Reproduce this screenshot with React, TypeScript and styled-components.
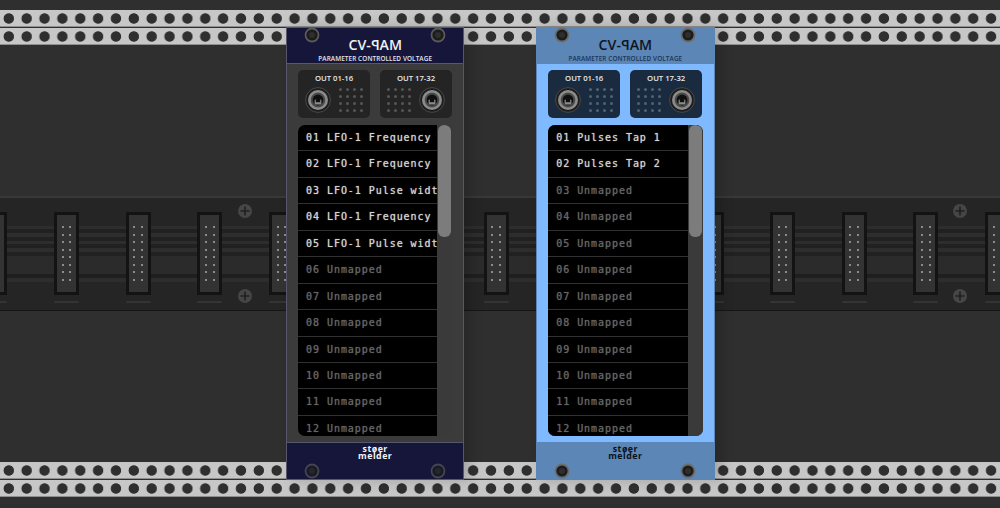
import React from 'react'
import styled, { createGlobalStyle } from 'styled-components'

const GlobalStyle = createGlobalStyle`
  html, body {
    margin: 0;
    padding: 0;
    background: #2f2f2f;
    overflow: hidden;
  }
`

interface Skin {
  panel: string
  band: string
  edge: string
  title: string
  subtitle: string
  brand: string
  block: string
  dot: string
  screwRing: string
}

const DARK: Skin = {
  panel: '#3b3b3b',
  band: '#15163a',
  edge: '#56566c',
  title: '#f0f0f0',
  subtitle: '#e6e6ee',
  brand: '#f4f4f4',
  block: '#242424',
  dot: '#565656',
  screwRing: '#5a5a5a',
}

const LIGHT: Skin = {
  panel: '#7fb9ff',
  band: '#5b86b6',
  edge: '#5b86b6',
  title: '#10151d',
  subtitle: '#1c3557',
  brand: '#0c1118',
  block: '#1a2a3f',
  dot: '#4f6475',
  screwRing: '#6c6c6c',
}

const Rack = styled.div`
  position: relative;
  width: 1000px;
  height: 508px;
  overflow: hidden;
  display: flex;
  flex-direction: column;
  padding: 10px 0;
  box-sizing: border-box;
  background: #2f2f2f;
`

const Rail = styled.div`
  height: 17px;
  flex: none;
  margin-bottom: 1px;
  background-color: #c7c7c7;
  background-image: radial-gradient(circle at 8.8px 8.5px, #2f2f2f 4.8px, transparent 5.6px);
  background-size: 17.86px 17px;
  border-bottom: 1px solid #8f8f8f;
  box-sizing: border-box;
`

const Middle = styled.div`
  flex: 1;
  display: flex;
  flex-direction: column;
  padding-top: 150px;
  min-height: 0;
`

const Busboard = styled.div`
  position: relative;
  height: 115px;
  flex: none;
  overflow: hidden;
  box-sizing: border-box;
  border-top: 2px solid #383838;
  border-bottom: 1px solid #161616;
  background:
    linear-gradient(#2b2b2b, #2b2b2b) 0 58px / 100% 18px no-repeat,
    linear-gradient(#2d2d2d, #2d2d2d) 0 28px / 100% 3px no-repeat,
    linear-gradient(#2d2d2d, #2d2d2d) 0 35px / 100% 4px no-repeat,
    linear-gradient(#2d2d2d, #2d2d2d) 0 43px / 100% 3px no-repeat,
    linear-gradient(#2d2d2d, #2d2d2d) 0 50px / 100% 4px no-repeat,
    linear-gradient(#2d2d2d, #2d2d2d) 0 80px / 100% 4px no-repeat,
    linear-gradient(#212121, #212121) 0 31px / 100% 27px no-repeat,
    linear-gradient(#1f1f1f, #1f1f1f) 0 76px / 100% 4px no-repeat,
    #252525;
`

const ConnectorRow = styled.div`
  display: flex;
  gap: 46.62px;
  margin-left: -17.6px;
  padding-top: 14px;
`

const ConnectorSlot = styled.div`
  flex: none;
  width: 25px;
  display: flex;
  flex-direction: column;
  gap: 6px;
`

const Connector = styled.div`
  height: 83px;
  box-sizing: border-box;
  border: 3px solid #131313;
  background: #333;
  display: grid;
  grid-template-columns: repeat(2, 2px);
  grid-auto-rows: 2px;
  justify-content: center;
  column-gap: 5.7px;
  row-gap: 5.5px;
  padding-top: 11px;
`

const Pin = styled.i`
  display: block;
  background: #8c8c8c;
`

const ConnectorTick = styled.div`
  height: 2px;
  background: #343434;
  border-radius: 1px;
`

const BoardScrew = styled.svg<{ $x: number; $y: number }>`
  position: absolute;
  left: ${(p) => p.$x}px;
  top: ${(p) => p.$y}px;
  width: 14px;
  height: 14px;
`

const Module = styled.div<{ $x: number; $skin: Skin }>`
  position: absolute;
  top: 27px;
  left: ${(p) => p.$x}px;
  width: 178.4px;
  height: 452.6px;
  display: flex;
  flex-direction: column;
  background: ${(p) => p.$skin.panel};
  box-shadow: inset 0 0 0 1px ${(p) => p.$skin.edge}, 6px 0 12px rgba(0, 0, 0, 0.18);
`

const Band = styled.div<{ $skin: Skin }>`
  flex: none;
  background: ${(p) => p.$skin.band};
  border: 1px solid ${(p) => p.$skin.edge};
  box-sizing: border-box;
  display: flex;
  flex-direction: column;
  align-items: center;
`

const Header = styled(Band)`
  height: 37px;
  padding-top: 8px;
`

const Footer = styled(Band)`
  height: 38px;
  padding-top: 3px;
`

const Title = styled.div<{ $skin: Skin }>`
  font-family: 'Open Sans', sans-serif;
  font-size: 14.2px;
  line-height: 18px;
  font-weight: 600;
  color: ${(p) => p.$skin.title};
`

const MirroredLetter = styled.span`
  display: inline-block;
  transform: scaleX(-1);
`

const Subtitle = styled.div<{ $skin: Skin }>`
  font-family: 'Open Sans', sans-serif;
  font-size: 6.4px;
  line-height: 9px;
  font-weight: 600;
  letter-spacing: 0.1px;
  white-space: nowrap;
  color: ${(p) => p.$skin.subtitle};
`

const BrandLine = styled.div<{ $skin: Skin }>`
  font-family: 'Open Sans', sans-serif;
  font-size: 8.8px;
  line-height: 7.4px;
  height: 7.4px;
  font-weight: 700;
  letter-spacing: 0.5px;
  text-align: center;
  color: ${(p) => p.$skin.brand};
`

const Body = styled.div`
  flex: 1;
  min-height: 0;
  display: flex;
  flex-direction: column;
  gap: 7px;
  padding: 6px 12px;
  box-sizing: border-box;
`

const Ports = styled.div`
  flex: none;
  display: grid;
  grid-template-columns: 72px 72px;
  gap: 10px;
`

const PortBlock = styled.div<{ $skin: Skin }>`
  height: 48px;
  border-radius: 5px;
  background: ${(p) => p.$skin.block};
  display: flex;
  flex-direction: column;
  align-items: center;
`

const PortLabel = styled.div`
  font-family: 'Open Sans', sans-serif;
  font-weight: 600;
  font-size: 7.7px;
  line-height: 9px;
  margin-top: 4px;
  color: #eaeaea;
`

const PortRow = styled.div<{ $flip?: boolean }>`
  display: flex;
  flex-direction: ${(p) => (p.$flip ? 'row-reverse' : 'row')};
  align-items: center;
  gap: 8px;
  margin-top: 1.5px;
  height: 30px;
`

const DotGrid = styled.div`
  display: grid;
  grid-template-columns: repeat(4, 3px);
  grid-auto-rows: 3px;
  gap: 4px;
`

const Dot = styled.i<{ $skin: Skin }>`
  display: block;
  border-radius: 50%;
  background: ${(p) => p.$skin.dot};
`

const List = styled.div`
  flex: 1;
  min-height: 0;
  display: flex;
  border-radius: 7px;
  overflow: hidden;
  background: #3a3a3a;
`

const Rows = styled.div`
  flex: 1;
  min-width: 0;
  overflow: hidden;
  background: #000;
`

const Row = styled.div<{ $mapped: boolean }>`
  height: 26.45px;
  box-sizing: border-box;
  padding: 4px 0 0 8px;
  border-bottom: 1px solid #303030;
  font-family: 'DejaVu Sans Mono', monospace;
  font-size: 10px;
  line-height: 18px;
  letter-spacing: 0.95px;
  white-space: nowrap;
  color: ${(p) => (p.$mapped ? '#d4d4d4' : '#666')};
  text-shadow: 0 0 1px ${(p) => (p.$mapped ? '#b0b0b0' : '#555')};
`

const ScrollTrack = styled.div`
  flex: none;
  width: 15px;
  padding: 0 1px;
  box-sizing: border-box;
  background: #3a3a3a;
`

const ScrollThumb = styled.div`
  height: 112px;
  border-radius: 6px;
  background: #7c7c7c;
`

const PanelScrew = styled.svg<{ $x: number; $y: number; $dim?: boolean }>`
  position: absolute;
  left: ${(p) => p.$x}px;
  top: ${(p) => p.$y}px;
  width: 16px;
  height: 16px;
  opacity: ${(p) => (p.$dim ? 0.7 : 1)};
`

function Jack() {
  return (
    <svg width="26" height="26" viewBox="0 0 26 26">
      <circle cx="13" cy="13" r="12.4" fill="#1d1d1d" stroke="#5c5c5c" strokeWidth="0.7" />
      <circle cx="13" cy="13" r="10" fill="#8c8c8c" />
      <circle cx="13" cy="13" r="7.4" fill="#4a4a4a" />
      <circle cx="13" cy="13" r="5.4" fill="#101010" />
      <rect x="9.6" y="12.6" width="6.8" height="5" rx="1" fill="#8a8a8a" />
      <rect x="10.8" y="10.2" width="4.4" height="5" fill="#101010" />
    </svg>
  )
}

function Screw({ x, y, skin, dim }: { x: number; y: number; skin: Skin; dim?: boolean }) {
  return (
    <PanelScrew $x={x} $y={y} $dim={dim} viewBox="0 0 16 16">
      <circle cx="8" cy="8" r="7.4" fill={skin.screwRing} />
      <circle cx="8" cy="8" r="5.6" fill="#1c1c1c" />
      <circle cx="8" cy="8" r="3" fill="#2e2e2e" />
    </PanelScrew>
  )
}

function PlusScrew({ x, y }: { x: number; y: number }) {
  return (
    <BoardScrew $x={x} $y={y} viewBox="0 0 14 14">
      <circle cx="7" cy="7" r="7" fill="#464646" />
      <path d="M7 2.5v9M2.5 7h9" stroke="#202020" strokeWidth="1.6" />
    </BoardScrew>
  )
}

function Port({ label, flip, skin }: { label: string; flip?: boolean; skin: Skin }) {
  return (
    <PortBlock $skin={skin}>
      <PortLabel>{label}</PortLabel>
      <PortRow $flip={flip}>
        <Jack />
        <DotGrid>
          {Array.from({ length: 16 }, (_, i) => (
            <Dot key={i} $skin={skin} />
          ))}
        </DotGrid>
      </PortRow>
    </PortBlock>
  )
}

function CvPam({ x, skin, names }: { x: number; skin: Skin; names: string[] }) {
  const rows = Array.from({ length: 12 }, (_, i) => {
    const name = names[i]
    return {
      id: String(i + 1).padStart(2, '0'),
      text: name || 'Unmapped',
      mapped: Boolean(name),
    }
  })
  return (
    <Module $x={x} $skin={skin}>
      <Header $skin={skin}>
        <Title $skin={skin}>
          CV-<MirroredLetter>P</MirroredLetter>AM
        </Title>
        <Subtitle $skin={skin}>PARAMETER CONTROLLED VOLTAGE</Subtitle>
      </Header>
      <Body>
        <Ports>
          <Port label="OUT 01-16" skin={skin} />
          <Port label="OUT 17-32" skin={skin} flip />
        </Ports>
        <List>
          <Rows>
            {rows.map((row) => (
              <Row key={row.id} $mapped={row.mapped}>
                {row.id} {row.text}
              </Row>
            ))}
          </Rows>
          <ScrollTrack>
            <ScrollThumb />
          </ScrollTrack>
        </List>
      </Body>
      <Footer $skin={skin}>
        <BrandLine $skin={skin}>støer</BrandLine>
        <BrandLine $skin={skin}>melder</BrandLine>
      </Footer>
      <Screw x={18} y={0} skin={skin} />
      <Screw x={143.5} y={0} skin={skin} />
      <Screw x={18} y={436} skin={skin} dim={skin === DARK} />
      <Screw x={143.5} y={436} skin={skin} dim={skin === DARK} />
    </Module>
  )
}

const CONNECTORS = Array.from({ length: 15 }, (_, i) => i)

export default function App() {
  return (
    <Rack>
      <GlobalStyle />
      <Rail />
      <Rail />
      <Middle>
        <Busboard>
          <ConnectorRow>
            {CONNECTORS.map((c) => (
              <ConnectorSlot key={c}>
                <Connector>
                  {Array.from({ length: 16 }, (_, i) => (
                    <Pin key={i} />
                  ))}
                </Connector>
                <ConnectorTick />
              </ConnectorSlot>
            ))}
          </ConnectorRow>
          <PlusScrew x={238} y={6} />
          <PlusScrew x={238} y={91} />
          <PlusScrew x={953} y={6} />
          <PlusScrew x={953} y={91} />
        </Busboard>
      </Middle>
      <Rail />
      <Rail />
      <CvPam
        x={286}
        skin={DARK}
        names={[
          'LFO-1 Frequency',
          'LFO-1 Frequency',
          'LFO-1 Pulse width',
          'LFO-1 Frequency',
          'LFO-1 Pulse width',
        ]}
      />
      <CvPam x={536.2} skin={LIGHT} names={['Pulses Tap 1', 'Pulses Tap 2']} />
    </Rack>
  )
}
